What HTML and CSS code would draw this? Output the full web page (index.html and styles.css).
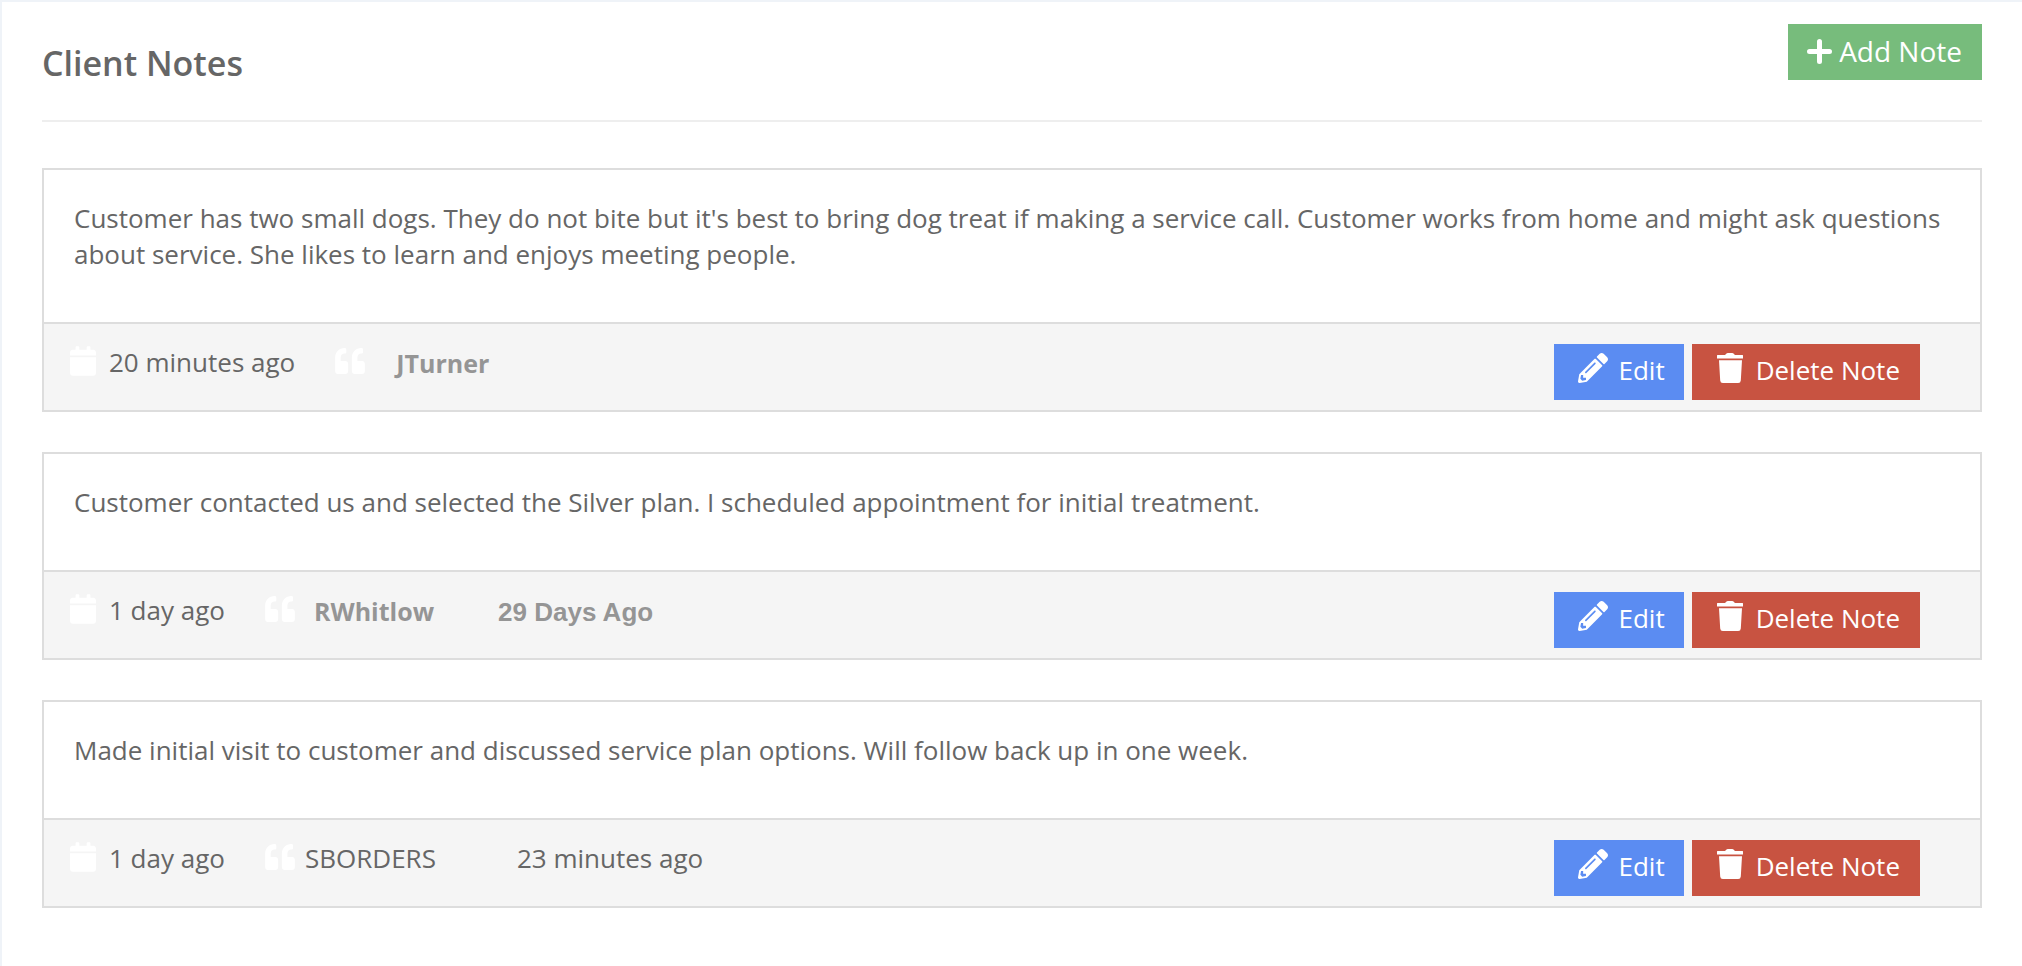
FILE: index.html
```
<!DOCTYPE html>
<html lang="en">
<head>
  <meta charset="utf-8">
  <title>Client Notes</title>
  <link rel="stylesheet" href="styles.css">
</head>
<body>
  <!-- Icons -->
  <svg class="sprite" aria-hidden="true">
    <symbol id="icon-plus" viewBox="0 0 25 25">
      <path d="M12.500 2.500V22.500M2.500 12.500H22.500" stroke="currentColor" stroke-width="5" stroke-linecap="round"/>
    </symbol>
    <symbol id="icon-calendar" viewBox="0 0 448 512">
      <path d="M0 464c0 26.500 21.500 48 48 48h352c26.500 0 48-21.500 48-48V192H0v272zM400 64h-48V16c0-8.800-7.200-16-16-16h-32c-8.800 0-16 7.200-16 16v48H160V16c0-8.800-7.200-16-16-16h-32c-8.800 0-16 7.200-16 16v48H48C21.500 64 0 85.500 0 112v48h448v-48c0-26.500-21.500-48-48-48z"/>
    </symbol>
    <symbol id="icon-quote" viewBox="0 32 512 448">
      <path d="M464 256h-80v-64c0-35.300 28.700-64 64-64h8c13.300 0 24-10.700 24-24V56c0-13.300-10.700-24-24-24h-8c-88.400 0-160 71.600-160 160v240c0 26.500 21.500 48 48 48h128c26.500 0 48-21.500 48-48V304c0-26.500-21.500-48-48-48zm-288 0H96v-64c0-35.300 28.700-64 64-64h8c13.300 0 24-10.700 24-24V56c0-13.300-10.700-24-24-24h-8C71.600 32 0 103.600 0 192v240c0 26.500 21.500 48 48 48h128c26.500 0 48-21.500 48-48V304c0-26.500-21.500-48-48-48z"/>
    </symbol>
    <symbol id="icon-pencil" viewBox="0 0 512 512">
      <path d="M497.900 142.100l-46.100 46.100c-4.700 4.700-12.300 4.700-17 0l-111-111c-4.700-4.700-4.700-12.300 0-17l46.100-46.100c18.700-18.700 49.100-18.700 67.900 0l60.100 60.100c18.800 18.700 18.800 49.100 0 67.900zM284.200 99.800L21.600 362.400.4 483.900c-2.900 16.400 11.400 30.600 27.800 27.800l121.500-21.300 262.600-262.600c4.700-4.700 4.700-12.300 0-17l-111-111c-4.800-4.700-12.400-4.700-17.100 0zM124.100 339.900c-5.500-5.500-5.500-14.300 0-19.800l154-154c5.500-5.500 14.300-5.500 19.800 0s5.500 14.300 0 19.800l-154 154c-5.500 5.500-14.300 5.500-19.800 0zM88 424h48v36.300l-64.500 11.300-31.100-31.100L51.700 376H88v48z"/>
    </symbol>
    <symbol id="icon-trash" viewBox="0 0 26 30">
      <path d="M0.500 2H8L9.500 0.500Q10 0 10.700 0H15.300Q16 0 16.500 0.500L18 2H25.500Q26 2 26 2.500V5.500H0V2.500Q0 2 0.500 2zM2 7.200H25L23.800 27.500Q23.600 30 21.200 30H5.800Q3.400 30 3.200 27.500z"/>
    </symbol>
  </svg>

  <div class="panel">
    <div class="panel-header">
      <h1 class="panel-title">Client Notes</h1>
      <button type="button" class="button add-note"><svg class="icon-plus"><use href="#icon-plus"/></svg>Add Note</button>
    </div>

    <div class="note">
      <p class="note-text">Customer has two small dogs. They do not bite but it's best to bring dog treat if making a service call. Customer works from home and might ask questions about service. She likes to learn and enjoys meeting people.</p>
      <div class="note-footer">
        <div class="note-meta">
          <svg class="icon-calendar"><use href="#icon-calendar"/></svg>
          <span class="note-date">20 minutes ago</span>
          <svg class="icon-quote"><use href="#icon-quote"/></svg>
          <span class="note-author strong spaced">JTurner</span>
        </div>
        <div class="note-buttons">
          <button type="button" class="button edit"><svg class="icon-pencil"><use href="#icon-pencil"/></svg>Edit</button>
          <button type="button" class="button delete"><svg class="icon-trash"><use href="#icon-trash"/></svg>Delete Note</button>
        </div>
      </div>
    </div>

    <div class="note">
      <p class="note-text">Customer contacted us and selected the Silver plan. I scheduled appointment for initial treatment.</p>
      <div class="note-footer">
        <div class="note-meta">
          <svg class="icon-calendar"><use href="#icon-calendar"/></svg>
          <span class="note-date">1 day ago</span>
          <svg class="icon-quote"><use href="#icon-quote"/></svg>
          <span class="note-author strong">RWhitlow</span>
          <span class="note-updated strong plain">29 Days Ago</span>
        </div>
        <div class="note-buttons">
          <button type="button" class="button edit"><svg class="icon-pencil"><use href="#icon-pencil"/></svg>Edit</button>
          <button type="button" class="button delete"><svg class="icon-trash"><use href="#icon-trash"/></svg>Delete Note</button>
        </div>
      </div>
    </div>

    <div class="note">
      <p class="note-text">Made initial visit to customer and discussed service plan options. Will follow back up in one week.</p>
      <div class="note-footer">
        <div class="note-meta">
          <svg class="icon-calendar"><use href="#icon-calendar"/></svg>
          <span class="note-date">1 day ago</span>
          <svg class="icon-quote"><use href="#icon-quote"/></svg>
          <span class="note-author">SBORDERS</span>
          <span class="note-updated">23 minutes ago</span>
        </div>
        <div class="note-buttons">
          <button type="button" class="button edit"><svg class="icon-pencil"><use href="#icon-pencil"/></svg>Edit</button>
          <button type="button" class="button delete"><svg class="icon-trash"><use href="#icon-trash"/></svg>Delete Note</button>
        </div>
      </div>
    </div>
  </div>
</body>
</html>
```
FILE: styles.css
```
/* General Styles */
* {
  box-sizing: border-box;
}

body {
  margin: 0;
  background-color: #ffffff;
  color: #666666;
  font-family: "Open Sans", Arial, sans-serif;
  font-size: 26px;
  line-height: 36px;
}

.sprite {
  display: none;
}

svg {
  flex: none;
  fill: currentColor;
}

/* Panel Styles */
.panel {
  min-height: 100vh;
  padding: 22px 40px 40px;
  border-top: 2px solid #eff3f8;
  border-left: 2px solid #eff3f8;
}

.panel-header {
  display: flex;
  justify-content: space-between;
  align-items: flex-start;
  padding-bottom: 40px;
  margin-bottom: 46px;
  border-bottom: 2px solid #eeeeee;
}

.panel-title {
  margin: 16px 0 -8px;
  font-size: 34px;
  font-weight: 600;
  line-height: 46px;
}

/* Button Styles */
.button {
  display: flex;
  align-items: flex-start;
  height: 56px;
  padding: 8px 20px;
  border: none;
  color: #ffffff;
  font-family: inherit;
  font-size: 26px;
  line-height: 36px;
  white-space: nowrap;
  cursor: pointer;
}

.add-note {
  padding-left: 19px;
  background-color: #77bc7c;
  font-size: 28px;
  line-height: 38px;
}

.edit {
  padding-left: 24px;
  padding-right: 19px;
  background-color: #5b8cf2;
}

.delete {
  padding-left: 25px;
  background-color: #c85341;
}

/* Note Styles */
.note {
  margin-bottom: 40px;
  border: 2px solid #dddddd;
}

.note-text {
  margin: 0;
  padding: 30px 30px 50px;
}

.note-footer {
  display: flex;
  justify-content: space-between;
  padding: 20px 60px 10px 26px;
  border-top: 2px solid #dddddd;
  background-color: #f5f5f5;
}

.note-meta,
.note-buttons {
  display: flex;
  align-items: flex-start;
}

.note-buttons {
  gap: 8px;
}

.note-date {
  margin: 0 40px 0 13px;
}

.note-author {
  margin-left: 10px;
}

.note-author.strong {
  margin-left: 19px;
}

.note-author.spaced {
  margin-left: 31px;
}

.note-updated {
  margin-left: 81px;
}

.strong {
  color: #959595;
  font-size: 25px;
  font-weight: 700;
  line-height: 38px;
}

.plain {
  margin-left: 64px;
  font-family: "Liberation Sans", Arial, sans-serif;
  font-size: 26px;
  line-height: 40px;
}

/* Icon Styles */
.icon-plus {
  width: 25px;
  height: 25px;
  margin: 7px 7px 0 0;
}

.icon-calendar {
  width: 26px;
  height: 30px;
  margin-top: 2px;
  color: #ffffff;
}

.icon-quote {
  width: 30px;
  height: 26px;
  margin-top: 4px;
  color: #ffffff;
}

.icon-pencil {
  width: 30px;
  height: 30px;
  margin: 1px 10px 0 0;
}

.icon-trash {
  width: 26px;
  height: 30px;
  margin: 1px 13px 0 0;
}
```
